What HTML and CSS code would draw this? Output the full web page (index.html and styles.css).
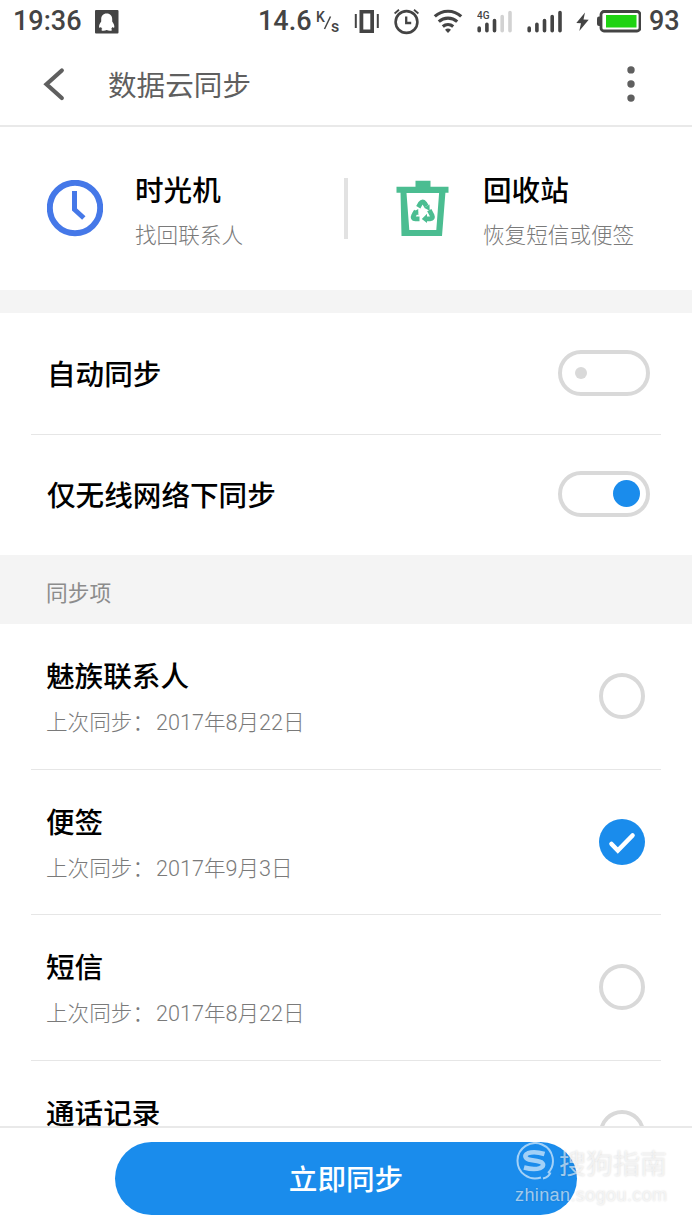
FILE: index.html
```html
<!DOCTYPE html>
<html lang="zh-cn">
<head>
  <meta charset="utf-8">
  <meta name="viewport" content="width=device-width, initial-scale=1.0">
  <title>数据云同步</title>
  <link rel="stylesheet" href="styles.css">
</head>
<body>
  <div class="status-bar">
    <span class="time">19:36</span>
    <svg class="qq" width="24" height="24" viewBox="0 0 24 24">
      <rect width="23.5" height="23.5" rx="1" fill="#444"/>
      <path d="M11.700 3.500c-3.700 0-5.500 2.600-5.500 5.700v2.200c-1.700 2.300-2.500 4.400-2 6.200.5.600 1.200.1 1.800-.5.300.9.800 1.500 1.400 2-1.300.4-1.400 1.300-.2 1.600 1.500.3 3.400 0 4.500-.7 1.100.7 3 1 4.500.7 1.200-.3 1.100-1.200-.2-1.600.6-.5 1.100-1.100 1.400-2 .6.600 1.300 1.100 1.800.5.500-1.800-.3-3.900-2-6.200V9.200c0-3.100-1.800-5.700-5.500-5.700z" fill="#fff"/>
    </svg>
    <span class="speed">14.6</span>
    <svg class="unit" width="26" height="30" viewBox="0 0 26 30">
      <text x="1" y="14.500">K</text>
      <path d="M9.500 22L15.500 9.500" stroke="#444" stroke-width="1.500"/>
      <text class="second" x="16" y="24.500">s</text>
    </svg>
    <svg class="vibrate" width="26" height="26" viewBox="0 0 26 26" fill="#444">
      <path d="M.8 5h2v14h-2zM22.800 5h2v14h-2z"/>
      <path fill-rule="evenodd" d="M5.500 1h14.500v23h-14.500zM9.300 4.500v16h7v-16z"/>
    </svg>
    <svg class="alarm" width="26" height="26" viewBox="0 0 26 26" fill="none" stroke="#444">
      <circle cx="12.500" cy="13" r="10.900" stroke-width="2.600"/>
      <path d="M12.200 7.500v6.500h5" stroke-width="2.300"/>
      <path d="M.6 4.500L5 .8M24.400 4.500L20 .8" stroke-width="1.800"/>
    </svg>
    <svg class="wifi" width="30" height="26" viewBox="0 0 30 26" fill="none" stroke="#444" stroke-width="3.200">
      <path d="M1.800 7.400a19.500 19.500 0 0 1 26.400 0M5.800 12.600a14 14 0 0 1 18.400 0M9.800 17.500a8.200 8.200 0 0 1 10.400 0"/>
      <path d="M15 24l-3-3.300q3-2.400 6 0z" fill="#444" stroke="none"/>
    </svg>
    <svg class="signal signal-4g" width="36" height="26" viewBox="0 0 36 26" stroke="#444" stroke-width="3.600" stroke-linecap="round">
      <text x="0" y="9.500" stroke="none">4G</text>
      <path d="M2.200 19v2.700M9.900 15.300v6.400M17.500 11.500v10.200"/>
      <path d="M25.200 7.500v14.200M33 3.500v18.200" stroke="#d2d2d2"/>
    </svg>
    <svg class="signal" width="36" height="26" viewBox="0 0 36 26" stroke="#444" stroke-width="3.600" stroke-linecap="round">
      <path d="M2.200 19v2.700M9.900 15.300v6.400M17.500 11.500v10.200M25.200 7.500v14.200M33 3.500v18.200"/>
    </svg>
    <svg class="bolt" width="13" height="20" viewBox="0 0 13 20">
      <path d="M9 .5L.3 11l4.700.3L3.300 19 12.700 7.800 7.500 7.500z" fill="#444"/>
    </svg>
    <svg class="battery" width="44" height="24" viewBox="0 0 44 24">
      <rect y="6.500" width="5" height="9.500" rx="2" fill="#444"/>
      <rect x="4" y="1.500" width="39" height="19.500" rx="3" fill="#fff" stroke="#444" stroke-width="2.800"/>
      <rect x="9" y="5" width="30.500" height="12.500" fill="#1fd313"/>
    </svg>
    <span class="percent">93</span>
  </div>

  <div class="header">
    <svg class="back" width="22" height="34" viewBox="0 0 22 34">
      <path d="M18.800 3.500L3.500 17.300l15.300 13.700" fill="none" stroke="#5f5f5f" stroke-width="4.200" stroke-linecap="round"/>
    </svg>
    <h1>数据云同步</h1>
    <svg class="more" width="8" height="38" viewBox="0 0 8 38" fill="#5f5f5f">
      <circle cx="4" cy="4.900" r="3.700"/>
      <circle cx="4" cy="19" r="3.700"/>
      <circle cx="4" cy="33.100" r="3.700"/>
    </svg>
  </div>

  <div class="shortcuts">
    <div class="shortcut">
      <svg width="56" height="58" viewBox="0 0 56 58" fill="none" stroke="#4578e8">
        <circle cx="28" cy="28" r="25.200" stroke-width="6"/>
        <path d="M27.500 11v18.500l9.300 8.500" stroke-width="5"/>
      </svg>
      <div>
        <h2>时光机</h2>
        <p>找回联系人</p>
      </div>
    </div>
    <div class="shortcut recycle">
      <svg width="54" height="58" viewBox="0 0 54 58" fill="#4bbd91">
        <path d="M19.500.8h15v6h18v6H.5v-6h19z"/>
        <path fill-rule="evenodd" d="M4.500 11.500h45l-3.500 44.500h-40.500zM10.500 13l2.800 37h27l2.800-37z"/>
        <g fill="none" stroke="#4bbd91" stroke-width="4.800">
          <path d="M22.300 27.200l2.200-3.900q2-3 4.200 0l1.700 3"/>
          <path d="M20.200 31l-2.500 4.300q-1.700 3.400 1.800 3.600h4"/>
          <path d="M33.300 30.200l2.700 5q1.500 3.400-2 3.700h-4"/>
        </g>
        <path d="M28 27.700l5.500-3.200.2 6.200zM16.500 32.200l5.700-3.300.2 6.300zM31 33.700l-5.200 5.200 5.200 4.100z"/>
      </svg>
      <div>
        <h2>回收站</h2>
        <p>恢复短信或便签</p>
      </div>
    </div>
  </div>

  <div class="settings">
    <div class="setting">
      <span>自动同步</span>
      <i class="switch"></i>
    </div>
    <div class="setting">
      <span>仅无线网络下同步</span>
      <i class="switch on"></i>
    </div>
  </div>

  <div class="section-title">同步项</div>

  <div class="list">
    <div class="item">
      <div>
        <h2>魅族联系人</h2>
        <p>上次同步：<span>2017年8月22日</span></p>
      </div>
      <i class="check"></i>
    </div>
    <div class="item">
      <div>
        <h2>便签</h2>
        <p>上次同步：<span>2017年9月3日</span></p>
      </div>
      <i class="check checked">
        <svg width="46" height="46" viewBox="0 0 46 46">
          <path d="M12.500 25l6.300 6.500L33.500 16.500" fill="none" stroke="#fff" stroke-width="4.600" stroke-linecap="round"/>
        </svg>
      </i>
    </div>
    <div class="item">
      <div>
        <h2>短信</h2>
        <p>上次同步：<span>2017年8月22日</span></p>
      </div>
      <i class="check"></i>
    </div>
    <div class="item">
      <div>
        <h2>通话记录</h2>
      </div>
      <i class="check"></i>
    </div>
  </div>

  <div class="footer">
    <button>立即同步</button>
    <div class="watermark">
      <div class="brand">
        <svg width="40" height="40" viewBox="0 0 40 40" fill="none">
          <path d="M33 31A17.700 17.700 0 1 0 26 35.500M28 36.500q6-1.500 7.500-6" stroke="currentColor" stroke-width="2"/>
          <path d="M29.500 12q-10-3-16.500-.8c-4.500 2-3 6 3 6.800l6 .9c7 1 8 5 3 7.200q-6 2.200-16-.6" stroke="currentColor" stroke-width="4.500"/>
        </svg>
        <span>搜狗指南</span>
      </div>
      <div class="site">zhinan.sogou.com</div>
    </div>
  </div>
</body>
</html>
```

FILE: styles.css
```css
:root {
  --color-primary: #1a8cec;
  --color-line: #e6e6e6;
  --color-ring: #d9d9d9;
  --color-status: #444;
}
* {
  box-sizing: border-box;
}
body {
  margin: 0;
  height: 1230px;
  overflow: hidden;
  display: flex;
  flex-direction: column;
  background-color: #fff;
  color: #000;
  font-family: Roboto, "Noto Sans CJK SC", sans-serif;
}
h1, h2, p {
  margin: 0;
}
h2 {
  font-size: 28.6px;
  line-height: 42px;
  font-weight: 500;
}
p {
  font-size: 21.6px;
  line-height: 32px;
  font-weight: 300;
  color: #7a7a7a;
}
svg {
  display: block;
  flex: none;
}

/* status bar */
.status-bar {
  flex: none;
  height: 43px;
  padding-left: 13px;
  display: flex;
  align-items: center;
  color: var(--color-status);
  font-size: 27px;
  font-weight: 500;
  line-height: 45px;
  white-space: nowrap;
}
.status-bar text {
  fill: var(--color-status);
  font-size: 14px;
}
.status-bar .second {
  font-size: 16px;
}
.time {
  width: 82px;
}
.speed {
  width: 57px;
  margin-left: 139px;
}
.vibrate {
  margin-left: 13px;
}
.alarm {
  margin-left: 14px;
}
.wifi {
  margin-left: 13px;
}
.signal {
  margin-left: 14px;
}
.status-bar .signal text {
  font-size: 10px;
}
.bolt {
  margin-left: 13px;
}
.battery {
  margin-left: 8px;
}
.percent {
  margin-left: 8px;
}

/* title bar */
.header {
  flex: none;
  height: 84px;
  padding: 0 57px 0 43px;
  border-bottom: 2px solid #e9e9e9;
  display: flex;
  align-items: center;
}
.header h1 {
  flex: 1;
  margin-left: 43px;
  padding-top: 3px;
  font-size: 28.6px;
  line-height: 42px;
  font-weight: 400;
  color: #5f5f5f;
}

.shortcuts {
  flex: none;
  height: 163px;
  display: flex;
  align-items: center;
}
.shortcut {
  width: 344px;
  height: 61px;
  padding-left: 47px;
  display: flex;
  align-items: center;
}
.shortcut > div {
  margin-left: 32px;
  padding-top: 4px;
}
.shortcut h2 {
  margin-bottom: 8px;
}
.shortcut.recycle {
  flex: 1;
  padding-left: 48px;
  border-left: 4px solid #e2e2e2;
}
.shortcut.recycle > div {
  margin-left: 33px;
}

.settings {
  flex: none;
  height: 265px;
  border-top: 23px solid #f4f4f4;
}
.setting {
  height: 121px;
  margin: 0 31px;
  padding: 0 11px 2px 16px;
  display: flex;
  align-items: center;
  justify-content: space-between;
  font-size: 28.6px;
  line-height: 42px;
  font-weight: 500;
}
.setting + .setting {
  border-top: 1px solid var(--color-line);
  padding-bottom: 3px;
}
.setting span {
  margin-top: 4px;
}
.switch {
  width: 92px;
  height: 46px;
  border: 4px solid var(--color-ring);
  border-radius: 23px;
  padding: 0 13px;
  display: flex;
  align-items: center;
}
.switch::before {
  content: "";
  width: 12px;
  height: 12px;
  border-radius: 50%;
  background-color: var(--color-ring);
}
.switch.on {
  justify-content: flex-end;
  padding: 0 6px;
}
.switch.on::before {
  width: 27px;
  height: 27px;
  background-color: var(--color-primary);
}

.section-title {
  flex: none;
  height: 69px;
  padding-left: 46px;
  line-height: 78px;
  font-size: 21.7px;
  background-color: #f4f4f4;
  color: #8c8c8c;
}

/* sync items, the last row runs under the footer */
.list {
  flex: 1;
  min-height: 0;
  overflow: hidden;
}
.item {
  height: 145.5px;
  margin: 0 31px;
  padding: 32px 16px 0 15px;
  border-bottom: 1.5px solid var(--color-line);
  display: flex;
  justify-content: space-between;
}
.item p {
  margin-top: 9px;
}
.item p span {
  margin-left: 2px;
}
.check {
  width: 46px;
  height: 46px;
  margin-top: 17px;
  border: 4px solid var(--color-ring);
  border-radius: 50%;
}
.check.checked {
  border: none;
  background-color: var(--color-primary);
}

.footer {
  flex: none;
  height: 104px;
  padding-top: 14px;
  border-top: 2px solid #e9e9e9;
  background-color: #fff;
  position: relative;
}
.footer button {
  display: block;
  width: 462px;
  height: 73px;
  margin: 0 auto;
  padding: 0 0 3px;
  border: none;
  border-radius: 37px;
  background-color: var(--color-primary);
  color: #fff;
  font: 500 28.6px Roboto, "Noto Sans CJK SC", sans-serif;
}
.watermark {
  position: absolute;
  left: 515px;
  top: 13px;
  color: rgba(255, 255, 255, 0.6);
  text-shadow: 0 0 2px rgba(0, 0, 0, 0.17);
}
.brand {
  display: flex;
  align-items: center;
  height: 42px;
  font-size: 27px;
  white-space: nowrap;
}
.brand span {
  margin-left: 4px;
}
.site {
  font-family: "Liberation Sans", sans-serif;
  font-size: 18px;
  line-height: 24px;
  letter-spacing: 0.4px;
}
```
